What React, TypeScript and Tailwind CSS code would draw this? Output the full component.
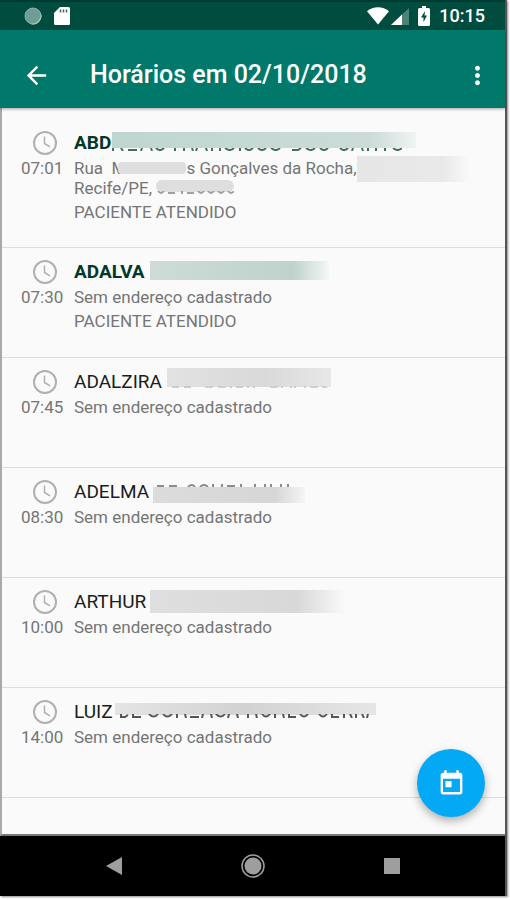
import { ReactNode } from "react";
import { MdArrowBack, MdMoreVert, MdToday } from "react-icons/md";
import clsx from "clsx";

interface Appointment {
  time: string;
  name: string;
  attended?: boolean;
  mask: ReactNode;
  address?: ReactNode;
}

// Blurred bar over private data. Leftover ink peeks out above or below it.
function Mask({ className, children }: { className: string; children?: ReactNode }) {
  return (
    <span aria-hidden="true" className={clsx("relative block shrink-0 self-start", className)}>
      {children}
    </span>
  );
}

function Ink({ className, d }: { className: string; d: string }) {
  return (
    <svg className={clsx("absolute", className)} fill="none" stroke="currentColor" strokeWidth="2">
      <path d={d} />
    </svg>
  );
}

const appointments: Appointment[] = [
  {
    time: "07:01",
    name: "ABD",
    attended: true,
    mask: (
      <Mask className="ml-px mt-px h-4 w-[304px] bg-linear-to-r from-[#bfd6d0] via-[#cbdcd8] via-85% to-[#f0f4f3]">
        <Ink
          className="left-0 top-4 h-[3px] w-[290px] text-[#446d61]"
          d="M1 0v3m8-3l2 3m5-1h9m5-2l-1 3m10-3l1 3m4-3q4 4 8 0m11 0v3m9-3v3m8-3l1 3m4-3l-1 3m10-3l1 3m5-3v3m8-3v3m5-3q5 4 9 0m6 0v3m5-3q4 4 8 0m5 0q4 4 8 0m5 0q5 4 9 0m12 2h6l3-2m5 0q5 4 9 0m5 0q4 4 8 0m12 0q4 4 8 0m5 0l-1 3m10-3l1 3m5-3v3m8-3v3m9-3v3m8-3q5 4 9 0m5 0q4 4 8 0"
        />
      </Mask>
    ),
    address: (
      <>
        <span className="flex whitespace-pre">
          Rua{"  "}M
          <Mask className="-ml-2 mt-1 h-3 w-[68px] rounded-sm bg-[#dedede]" />
          s Gonçalves da Rocha,
          <Mask className="-mt-[2px] -mb-1 h-[26px] w-[114px] bg-linear-to-r from-[#e6e6e6] via-[#e9e9e9] via-75% to-[#fafafa]" />
        </span>
        <span className="flex whitespace-pre">
          Recife/PE,{" "}
          <Mask className="mt-[2px] h-3 w-[78px] rounded-md bg-[#dedede]">
            <Ink
              className="left-0 top-[11px] h-[3px] w-[78px] text-[#a0a0a0]"
              d="M2 0q3 4 6 0m4 2h7m7-2v3m5-1h7m4-2q3 4 6 0m4 0q3 4 6 0m4 0q3 4 6 0m4 0q3 4 6 0"
            />
          </Mask>
        </span>
      </>
    ),
  },
  {
    time: "07:30",
    name: "ADALVA",
    attended: true,
    mask: (
      <Mask className="ml-[5px] mt-px h-[19px] w-[179px] bg-linear-to-r from-[#cddcd8] via-[#bfd2cc] via-80% to-[#f4f7f6]" />
    ),
  },
  {
    time: "07:45",
    name: "ADALZIRA",
    mask: (
      <Mask className="ml-[5px] -mt-[2px] h-[19px] w-[164px] bg-linear-to-r from-[#e2e2e2] via-[#d9d9d9] via-60% to-[#e8e8e8]">
        <Ink
          className="left-1 top-[18px] h-[2px] w-[156px] text-[#cccccc]"
          d="M1 1h7m5 0h7m14-1q4 3 8 0m5 0q4 3 8 0m5 0v2m5-1h7m5-1v2m6-2v2m16-2q4 3 8 0m4 0v2m9-2v2m4-2v2m10-2v2m5-2q4 3 8 0m4 0q4 3 8 0"
        />
      </Mask>
    ),
  },
  {
    time: "08:30",
    name: "ADELMA",
    mask: (
      <Mask className="ml-1 mt-[7px] h-4 w-[152px] bg-linear-to-r from-[#dcdcdc] via-[#d6d6d6] via-80% to-[#f5f5f5]">
        <Ink
          className="-top-[3px] left-1 h-[3px] w-[140px] text-[#8c8c8c]"
          d="M0 2h7m5 0h8m11 1q4-4 7 0m5 0q4-4 8 0m5 0v-3m9 3v-3m5 2h8m6 1v-3m14 3v-3m10 3v-3m6 3v-3m10 3v-3m7 3v-3"
        />
      </Mask>
    ),
  },
  {
    time: "10:00",
    name: "ARTHUR",
    mask: (
      <Mask className="ml-1 h-[23px] w-[196px] bg-linear-to-r from-[#dfdfdf] via-[#d8d8d8] via-75% to-[#fafafa]" />
    ),
  },
  {
    time: "14:00",
    name: "LUIZ",
    mask: (
      <Mask className="ml-[2px] mt-[3px] h-3 w-[261px] bg-linear-to-r from-[#e4e4e4] via-[#d2d2d2] via-50% to-[#e6e6e6]">
        <Ink
          className="left-[5px] top-[11px] h-[4px] w-[256px] text-[#555]"
          d="M1 0v3h4l3-2m5-1v3h8m8-3q5 5 9 0m5 0q4 5 9 0m5 0v4m8-4l1 4m4-1h9m4-3l-1 4m9-4l1 4m4-4q5 5 9 0m4 0l-1 4m9-4l1 4m10-4v4m8-4l1 4m5-4q4 5 8 0m5 0v4m8-4l1 4m5-4v3h7m4-3q4 5 8 0m11 0q4 5 8 0m5 0v3h7m5-3v4m6-4l2 4m4-4v4m6-4l2 4m4-4l-1 4"
        />
      </Mask>
    ),
  },
];

function StatusBar() {
  return (
    <div className="flex h-[30px] items-center justify-between border-t-2 border-[#003a30] bg-[#004d40] pl-6 pr-5 text-white">
      <div className="flex items-center gap-3">
        <svg className="size-[18px]" viewBox="0 0 18 18">
          <circle cx="9" cy="9" r="8" fill="#6f9d94" />
          <path d="M16.4 5.5A8.2 8.2 0 0 1 5.5 16.6 9 9 0 0 0 16.4 5.5Z" fill="#dcebe8" />
          <circle cx="9" cy="9" r="8" fill="none" stroke="#9dbdb6" strokeWidth="0.8" />
        </svg>
        <svg className="h-[18px] w-4" viewBox="0 0 16 18">
          <path d="M6 0h8.500Q16 0 16 1.500v15q0 1.500-1.500 1.500h-13Q0 18 0 16.500V6Z" fill="#fff" />
          <path d="M6.500 2.500v3M9.500 2.500v3M12.500 2.500v3" stroke="#40685f" strokeWidth="1.500" />
        </svg>
      </div>
      <div className="flex items-center">
        <svg className="h-[18px] w-[22px]" viewBox="0 0 22 18">
          <path d="M0 4.300C6-1.200 16-1.200 22 4.300L11 17.500Z" fill="#fff" />
        </svg>
        <svg className="ml-[2px] h-[17px] w-[18px]" viewBox="0 0 18 17">
          <path d="M0 17 18 0v17Z" fill="#4d8279" />
          <path d="M0 17 11 6.600V17Z" fill="#fff" />
        </svg>
        <svg className="ml-[9px] h-5 w-3" viewBox="0 0 12 20">
          <path d="M4 0h4v2h2.500Q12 2 12 3.500v15q0 1.500-1.500 1.500h-9Q0 20 0 18.500v-15Q0 2 1.500 2H4Z" fill="#fff" />
          <path d="M7 5 3 11.500h2.500V16L9 9.500H6.500Z" fill="#004d40" />
        </svg>
        <span className="ml-[9px] text-[18px] font-medium leading-5">10:15</span>
      </div>
    </div>
  );
}

function ClockIcon() {
  return (
    <svg className="size-6" viewBox="0 0 24 24" fill="none" stroke="#b0b0b0">
      <circle cx="12" cy="12" r="11" strokeWidth="2" />
      <path d="M11.500 5.500v7l5.500 3.300" strokeWidth="1.500" />
    </svg>
  );
}

function AppointmentRow({ time, name, attended, mask, address }: Appointment) {
  return (
    <li className="flex min-h-[110px] gap-[9px] border-b border-[#dcdcdc] pb-[25px] pl-[19px] pt-3 text-[17px] leading-5 text-[#757575]">
      <div className="flex w-11 shrink-0 flex-col gap-[3px]">
        <span className="flex justify-center pl-1">
          <ClockIcon />
        </span>
        <time>{time}</time>
      </div>
      <div className="min-w-0">
        <h2
          className={clsx(
            "mb-[3px] flex h-6 text-[19px] leading-6",
            attended ? "font-bold text-[#00382b]" : "text-[#1c1c1c]",
          )}
        >
          {name}
          {mask}
        </h2>
        <div>{address ?? "Sem endereço cadastrado"}</div>
        {attended && <p className="mt-1">PACIENTE ATENDIDO</p>}
      </div>
    </li>
  );
}

export default function App() {
  return (
    <div className="flex min-h-screen flex-col bg-white pb-1 pr-[3px] font-[Roboto,sans-serif]">
      <div className="flex flex-1 flex-col border-r-2 border-[#555] shadow-[1px_1px_2px_#888]">
        <StatusBar />
        <header className="relative z-10 flex h-[78px] items-center bg-[#00796b] pl-[22px] pr-[13px] pt-3 text-white shadow-[0_1px_3px_rgba(0,0,0,0.35)]">
          <button type="button" aria-label="Voltar" className="mr-[39px]">
            <MdArrowBack className="size-[29px]" />
          </button>
          <h1 className="flex-1 text-[25px] font-medium leading-8">Horários em 02/10/2018</h1>
          <button type="button" aria-label="Mais opções">
            <MdMoreVert className="size-[29px]" />
          </button>
        </header>

        <main className="relative flex-1 border-b-2 border-l-2 border-b-[#777] border-l-[#aaa] bg-[#fafafa] pt-[11px]">
          <ul>
            {appointments.map((item) => (
              <AppointmentRow key={item.time} {...item} />
            ))}
          </ul>
          <button
            type="button"
            aria-label="Escolher data"
            className="absolute bottom-[17px] right-5 flex size-[68px] items-center justify-center rounded-full bg-[#03a9f4] text-white shadow-[0_4px_8px_rgba(0,0,0,0.3)]"
          >
            <MdToday className="size-[29px]" />
          </button>
        </main>

        <nav className="grid h-[60px] grid-cols-3 items-center justify-items-center bg-black px-11">
          <button type="button" aria-label="Anterior">
            <svg className="h-[18px] w-4" viewBox="0 0 16 18">
              <path d="M0 9 16 0v18Z" fill="#9e9e9e" />
            </svg>
          </button>
          <button type="button" aria-label="Início">
            <svg className="size-6" viewBox="0 0 24 24">
              <circle cx="12" cy="12" r="11" fill="none" stroke="#9e9e9e" strokeWidth="1.500" />
              <circle cx="12" cy="12" r="8.500" fill="#9e9e9e" />
            </svg>
          </button>
          <button type="button" aria-label="Recentes">
            <svg className="size-4" viewBox="0 0 16 16">
              <rect width="16" height="16" fill="#9e9e9e" />
            </svg>
          </button>
        </nav>
      </div>
    </div>
  );
}
